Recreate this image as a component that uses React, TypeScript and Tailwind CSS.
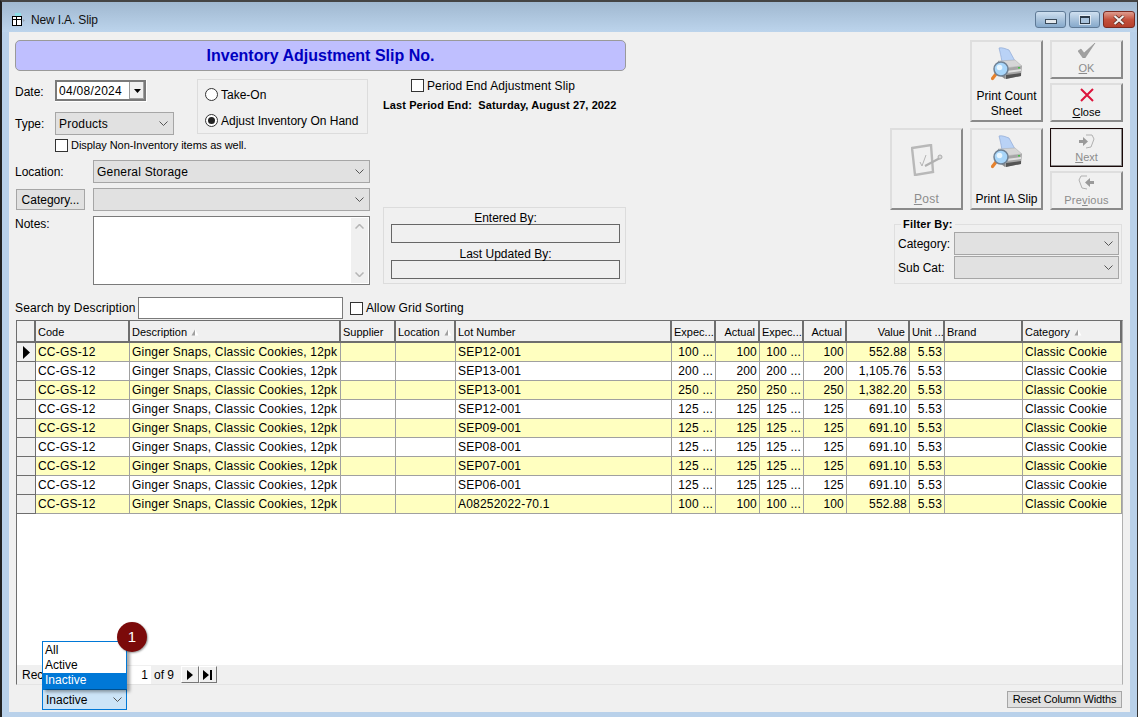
import React from 'react'

const gridCols =
  'grid grid-cols-[19px_94px_211px_55px_60px_216px_44px_44px_44px_43px_63px_35px_78px_99px]'

const columns = [
  { label: 'Code' },
  { label: 'Description', sort: true },
  { label: 'Supplier' },
  { label: 'Location', sort: true },
  { label: 'Lot Number' },
  { label: 'Expec...' },
  { label: 'Actual', right: true },
  { label: 'Expec...' },
  { label: 'Actual', right: true },
  { label: 'Value', right: true },
  { label: 'Unit ...' },
  { label: 'Brand' },
  { label: 'Category', sort: true }
]

const slips = [
  { lot: 'SEP12-001', qty: '100', value: '552.88' },
  { lot: 'SEP13-001', qty: '200', value: '1,105.76' },
  { lot: 'SEP13-001', qty: '250', value: '1,382.20' },
  { lot: 'SEP12-001', qty: '125', value: '691.10' },
  { lot: 'SEP09-001', qty: '125', value: '691.10' },
  { lot: 'SEP08-001', qty: '125', value: '691.10' },
  { lot: 'SEP07-001', qty: '125', value: '691.10' },
  { lot: 'SEP06-001', qty: '125', value: '691.10' },
  { lot: 'A08252022-70.1', qty: '100', value: '552.88' }
]

function Chevron() {
  return (
    <svg width="9" height="5" viewBox="0 0 9 5" className="shrink-0">
      <path d="M0.5 0.5 L4.5 4.5 L8.5 0.5" fill="none" stroke="#555" strokeWidth="1" />
    </svg>
  )
}

function Select({ value, className = '' }: { value?: string; className?: string }) {
  return (
    <div
      className={`flex items-center justify-between border border-[#a6a6a6] bg-[#e1e1e1] pl-[3px] pr-[5px] ${className}`}
    >
      <span>{value}</span>
      <Chevron />
    </div>
  )
}

function Checkbox() {
  return <span className="block h-[13px] w-[13px] shrink-0 border border-[#333] bg-white" />
}

function PrinterIcon() {
  return (
    <svg width="32" height="34" viewBox="0 0 32 34" className="block">
      <path d="M8 1 C11 0 15 2 18 3 L24 14 L11 15 C10 9 9 5 8 1 Z" fill="#b9d2f6" stroke="#8fa9d6" strokeWidth="0.7" />
      <path d="M7 14 L24 13 L31 19 L14 21 Z" fill="#d6d6d6" stroke="#a0a0a0" strokeWidth="0.4" />
      <path d="M14 21 L31 19 L30 29 L14 32 Z" fill="#a6a6a6" />
      <path d="M7 14 L14 21 L14 32 L6 26 Z" fill="#8c8c8c" />
      <path d="M15 24 L30 22 L30 24 L15 26 Z" fill="#e0e0e0" />
      <path d="M15 28 L30 26 L30 29 L15 32 Z" fill="#555555" />
      <rect x="27" y="20" width="2" height="1.5" fill="#46c046" />
      <path d="M5 27 L1.5 31.5" stroke="#e5822e" strokeWidth="3.2" strokeLinecap="round" />
      <circle cx="10" cy="22" r="7" fill="#a8d6fa" stroke="#6f8295" strokeWidth="1.5" />
      <circle cx="8.5" cy="20.5" r="2.8" fill="#e8f6ff" />
    </svg>
  )
}

function CheckIcon() {
  return (
    <svg width="18" height="15" viewBox="0 0 18 15" className="block">
      <path d="M0 8 L3 6 L6 10 L17 0 L7 15 L5 15 Z" fill="#a0a0a0" stroke="#8a8a8a" strokeWidth="0.5" />
    </svg>
  )
}

function CloseIcon() {
  return (
    <svg width="14" height="14" viewBox="0 0 14 14" className="block">
      <path d="M1 1 L13 13 M13 1 L1 13" stroke="#dc143c" strokeWidth="2" />
    </svg>
  )
}

function NextIcon() {
  return (
    <svg width="17" height="15" viewBox="0 0 17 15" className="block">
      <path d="M8 1 L14 1 L16 5 L13 13 L8 14" fill="none" stroke="#b0b0b0" />
      <path d="M1 6 L5 6 L5 3 L10 7.5 L5 12 L5 9 L1 9 Z" fill="#9a9a9a" />
    </svg>
  )
}

function PrevIcon() {
  return (
    <svg width="17" height="15" viewBox="0 0 17 15" className="block">
      <path d="M9 1 L3 1 L1 5 L4 13 L9 14" fill="none" stroke="#b0b0b0" />
      <path d="M16 6 L12 6 L12 3 L7 7.5 L12 12 L12 9 L16 9 Z" fill="#9a9a9a" />
    </svg>
  )
}

function PostIcon() {
  return (
    <svg width="32" height="32" viewBox="0 0 32 32" className="block">
      <path d="M1 4 L20 1 L22 28 L4 31 Z" fill="#f0f0f0" stroke="#b8b8b8" strokeWidth="2.4" />
      <path d="M9 18 L11 22 L15 11" fill="none" stroke="#b5b5b5" strokeWidth="1" />
      <path d="M14 22 L29 14" stroke="#b0b0b0" strokeWidth="2" />
      <circle cx="29" cy="13" r="2" fill="#d9d9d9" stroke="#adadad" />
    </svg>
  )
}

function ToolButton({
  children,
  tall,
  disabled,
  focused
}: {
  children: React.ReactNode
  tall?: boolean
  disabled?: boolean
  focused?: boolean
}) {
  return (
    <button
      className={`flex w-[73px] flex-col items-center ${
        focused
          ? 'border border-[#1a0a0a] p-px shadow-[inset_-1px_-1px_0_#8a8a8a,inset_1px_1px_0_#dedede]'
          : 'border-2 border-t-[#dedede] border-l-[#dedede] border-r-[#8a8a8a] border-b-[#8a8a8a]'
      } ${tall ? 'h-[82px]' : 'h-[39px]'} ${disabled ? 'text-[#8c8c8c]' : 'text-black'}`}
    >
      {children}
    </button>
  )
}

function Header() {
  return (
    <div className={`${gridCols} h-[22px] shrink-0 text-[11px]`}>
      <div className="border-r-2 border-b-2 border-[#6e6e6e] bg-[#f0f0f0]" />
      {columns.map((col) => (
        <div
          key={col.label + col.right}
          className={`flex items-center gap-[4px] overflow-hidden whitespace-nowrap border-r-2 border-b-2 border-[#6e6e6e] bg-[#f0f0f0] pl-[2px] pt-[2px] ${
            col.right ? 'justify-end pr-[3px]' : 'pr-[1px]'
          }`}
        >
          <span>{col.label}</span>
          {col.sort && (
            <svg width="8" height="7" viewBox="0 0 8 7">
              <path d="M4 0.5 L0.5 6.5 L4 6.5 Z" fill="#a0a0a0" />
              <path d="M4 0.5 L7.5 6.5 L4 6.5 Z" fill="#ffffff" />
            </svg>
          )}
        </div>
      ))}
    </div>
  )
}

function Cell({ children, right }: { children?: React.ReactNode; right?: boolean }) {
  return (
    <div
      className={`overflow-hidden whitespace-nowrap border-r border-b border-[#a0a0a0] px-[2px] leading-[18px] tracking-[0.2px] ${
        right ? 'text-right' : ''
      }`}
    >
      {children}
    </div>
  )
}

function Row({ slip, index }: { slip: (typeof slips)[number]; index: number }) {
  return (
    <div className={`${gridCols} h-[19px] ${index % 2 === 0 ? 'bg-[#ffffc0]' : 'bg-white'}`}>
      <div className="flex items-center justify-center border-r border-b border-[#6e6e6e] bg-[#f0f0f0]">
        {index === 0 && (
          <svg width="7" height="13" viewBox="0 0 7 13">
            <path d="M0 0 L7 6.5 L0 13 Z" fill="#000" />
          </svg>
        )}
      </div>
      <Cell>CC-GS-12</Cell>
      <Cell>Ginger Snaps, Classic Cookies, 12pk</Cell>
      <Cell />
      <Cell />
      <Cell>{slip.lot}</Cell>
      <Cell right>{slip.qty} ...</Cell>
      <Cell right>{slip.qty}</Cell>
      <Cell right>{slip.qty} ...</Cell>
      <Cell right>{slip.qty}</Cell>
      <Cell right>{slip.value}</Cell>
      <Cell right>5.53</Cell>
      <Cell />
      <Cell>Classic Cookie</Cell>
    </div>
  )
}

function NavButton({ children }: { children: React.ReactNode }) {
  return (
    <button className="flex h-[17px] w-[18px] items-center justify-center border border-r-[#777] border-b-[#777] border-t-white border-l-white bg-[#f0f0f0]">
      {children}
    </button>
  )
}

function LeftForm() {
  return (
    <div className="w-[355px]">
      <div className="flex">
        <div className="w-[182px]">
          <div className="mt-[9px] flex h-[22px] items-center">
            <span className="w-[40px] pt-[1px]">Date:</span>
            <div className="flex h-[22px] w-[92px] items-center border-r border-b border-white">
              <div className="flex h-full w-full items-center border-2 border-[#7a7a7a] bg-white pl-[2px] tracking-[0.3px]">
                <span className="flex-1 pt-[1px]">04/08/2024</span>
                <span className="flex h-full w-[15px] items-center justify-center border-l border-[#999] bg-[#f0f0f0] shadow-[inset_-1px_-1px_0_#a0a0a0]">
                  <svg width="7" height="4" viewBox="0 0 7 4">
                    <path d="M0 0 L7 0 L3.5 4 Z" fill="#000" />
                  </svg>
                </span>
              </div>
            </div>
          </div>
          <div className="mt-[10px] flex h-[23px] items-center">
            <span className="w-[40px]">Type:</span>
            <Select value="Products" className="h-[23px] w-[119px] tracking-[0.2px]" />
          </div>
          <label className="ml-[40px] mt-[4px] flex h-[13px] items-center gap-[3px] text-[11px] tracking-[-0.05px]">
            <Checkbox />
            <span className="whitespace-nowrap">Display Non-Inventory items as well.</span>
          </label>
        </div>
        <div className="mt-[8px] h-[55px] w-[171px] border border-[#dcdcdc] pl-[7px] pt-[5px]">
          <div className="flex h-[19px] items-center gap-[3px]">
            <span className="h-[13px] w-[13px] rounded-full border border-[#333] bg-white" />
            <span>Take-On</span>
          </div>
          <div className="mt-[7px] flex h-[19px] items-center gap-[3px]">
            <span className="flex h-[13px] w-[13px] items-center justify-center rounded-full border border-[#333] bg-white">
              <span className="h-[7px] w-[7px] rounded-full bg-[#222]" />
            </span>
            <span className="whitespace-nowrap">Adjust Inventory On Hand</span>
          </div>
        </div>
      </div>
      <div className="mt-[8px] flex h-[23px] items-center">
        <span className="w-[78px]">Location:</span>
        <Select value="General Storage" className="h-[23px] w-[277px] tracking-[0.2px]" />
      </div>
      <div className="mt-[5px] flex h-[23px] items-center">
        <div className="w-[78px]">
          <button className="ml-[1px] h-[21px] w-[69px] border border-[#a6a6a6] bg-[#e1e1e1]">
            Category...
          </button>
        </div>
        <Select className="h-[23px] w-[277px]" />
      </div>
      <div className="mt-[5px] flex h-[69px]">
        <span className="mt-[-1px] w-[78px]">Notes:</span>
        <div className="flex w-[277px] justify-end border border-[#7a7a7a] bg-white p-[1px]">
          <div className="flex w-[17px] flex-col items-center justify-between bg-[#f0f0f0] py-[6px]">
            <svg width="9" height="5" viewBox="0 0 9 5">
              <path d="M0.5 4.5 L4.5 0.5 L8.5 4.5" fill="none" stroke="#b5b5b5" strokeWidth="1.5" />
            </svg>
            <svg width="9" height="5" viewBox="0 0 9 5">
              <path d="M0.5 0.5 L4.5 4.5 L8.5 0.5" fill="none" stroke="#b5b5b5" strokeWidth="1.5" />
            </svg>
          </div>
        </div>
      </div>
    </div>
  )
}

function MiddleForm() {
  return (
    <div className="flex w-[243px] flex-col">
      <label className="ml-[28px] mt-[8px] flex h-[13px] items-center gap-[3px] tracking-[0.1px]">
        <Checkbox />
        <span>Period End Adjustment Slip</span>
      </label>
      <div className="mt-[7px] whitespace-nowrap text-[11px] font-bold leading-[13px] tracking-[0.1px]">
        Last Period End:&nbsp; Saturday, August 27, 2022
      </div>
      <div className="mt-[95px] h-[77px] border border-[#dcdcdc] pl-[7px] pr-[5px] pt-[3px] text-center">
        <div className="h-[13px] leading-[15px]">Entered By:</div>
        <div className="h-[19px] border border-[#666]" />
        <div className="mt-[4px] h-[13px] leading-[15px]">Last Updated By:</div>
        <div className="h-[19px] border border-[#666]" />
      </div>
    </div>
  )
}

function RightPanel() {
  return (
    <div className="ml-auto mr-[7px] flex w-[233px] flex-col">
      <div className="flex justify-end gap-[7px]">
        <ToolButton tall>
          <span className="mt-[5px] block">
            <PrinterIcon />
          </span>
          <span className="mt-[8px] block leading-[15px]">
            Print Count
            <br />
            Sheet
          </span>
        </ToolButton>
        <div className="flex flex-col gap-[4px]">
          <ToolButton disabled>
            <span className="mt-[1px] block">
              <CheckIcon />
            </span>
            <span className="mt-[3px] block text-[11px] leading-[15px]">
              <u>O</u>K
            </span>
          </ToolButton>
          <ToolButton>
            <span className="mt-[3px] block">
              <CloseIcon />
            </span>
            <span className="mt-[3px] block text-[11px] leading-[14px]">
              <u>C</u>lose
            </span>
          </ToolButton>
        </div>
      </div>
      <div className="mt-[6px] flex justify-end gap-[7px]">
        <ToolButton tall disabled>
          <span className="mt-[14px] block">
            <PostIcon />
          </span>
          <span className="mt-[16px] block leading-[15px] tracking-[0.3px]">
            <u>P</u>ost
          </span>
        </ToolButton>
        <ToolButton tall>
          <span className="mt-[5px] block">
            <PrinterIcon />
          </span>
          <span className="mt-[23px] block whitespace-nowrap leading-[15px]">Print IA Slip</span>
        </ToolButton>
        <div className="flex flex-col gap-[4px]">
          <ToolButton disabled focused>
            <span className="mt-[4px] block">
              <NextIcon />
            </span>
            <span className="mt-[1px] block text-[11px] leading-[14px]">
              <u>N</u>ext
            </span>
          </ToolButton>
          <ToolButton disabled>
            <span className="mt-[2px] block">
              <PrevIcon />
            </span>
            <span className="mt-[3px] block text-[11px] leading-[15px] tracking-[0.2px]">
              Pre<u>v</u>ious
            </span>
          </ToolButton>
        </div>
      </div>
      <fieldset className="ml-[4px] mr-[1px] mt-[7px] h-[67px] border border-[#dfdfdf] pl-[3px] pr-[2px]">
        <legend className="ml-[3px] px-[2px] text-[11px] font-bold leading-[14px] tracking-[0.2px]">
          Filter By:
        </legend>
        <div className="mt-[1px] flex h-[23px] items-center justify-between">
          <span>Category:</span>
          <Select className="h-[23px] w-[165px]" />
        </div>
        <div className="mt-[1px] flex h-[23px] items-center justify-between">
          <span>Sub Cat:</span>
          <Select className="h-[23px] w-[165px]" />
        </div>
      </fieldset>
    </div>
  )
}

function BottomBar() {
  return (
    <div className="flex h-[27px] shrink-0 justify-between pl-[33px] pr-[8px] text-[12px]">
      <div className="relative mt-[4px] h-[21px] w-[85px]">
        <div className="flex h-full items-center justify-between border border-[#0078d7] bg-[#cce4f7] pl-[3px] pr-[4px]">
          <span>Inactive</span>
          <Chevron />
        </div>
        <div className="absolute bottom-full left-0 h-[48px] w-[85px] border border-[#0078d7] bg-white pt-[1px] shadow-[3px_3px_3px_rgba(0,0,0,0.35)]">
          <div className="h-[15px] pl-[2px] leading-[15px]">All</div>
          <div className="h-[15px] pl-[2px] leading-[15px]">Active</div>
          <div className="h-[15px] bg-[#0078d7] pl-[2px] leading-[15px] text-white">Inactive</div>
        </div>
        <div className="absolute left-[75px] top-[-67px] flex h-[30px] w-[30px] items-center justify-center rounded-full bg-[#7b0a0a] text-[15px] text-white shadow-[1px_1px_2px_rgba(0,0,0,0.4)]">
          1
        </div>
      </div>
      <button className="mt-[6px] h-[17px] w-[115px] border border-[#a6a6a6] bg-[#e1e1e1] text-[11px] leading-[15px] tracking-[-0.15px]">
        Reset Column Widths
      </button>
    </div>
  )
}

function WindowControls() {
  return (
    <div className="mr-[2px] mt-[5px] flex gap-[3px]">
      <div className="flex h-[17px] w-[31px] items-center justify-center rounded-[3px] border border-[#5f7a96] bg-gradient-to-b from-[#cfe0f0] via-[#a9c3dc] to-[#86a9cb]">
        <span className="mt-[3px] h-[5px] w-[12px] border border-[#3a4a5a] bg-[#e4e9ee]" />
      </div>
      <div className="flex h-[17px] w-[31px] items-center justify-center rounded-[3px] border border-[#5f7a96] bg-gradient-to-b from-[#cfe0f0] via-[#a9c3dc] to-[#86a9cb]">
        <span className="h-[8px] w-[10px] border border-t-2 border-[#2d3a48] bg-[#a9c3dc] shadow-[0_0_0_1px_rgba(255,255,255,0.6)]" />
      </div>
      <div className="flex h-[17px] w-[32px] items-center justify-center rounded-[3px] border border-[#7a2a20] bg-gradient-to-b from-[#dd9d90] via-[#c4513d] to-[#b5402c]">
        <svg width="12" height="10" viewBox="0 0 12 10">
          <path d="M1.5 1 L10.5 9 M10.5 1 L1.5 9" stroke="#5a2a20" strokeWidth="3.6" />
          <path d="M1.5 1 L10.5 9 M10.5 1 L1.5 9" stroke="#f2f2f2" strokeWidth="2.2" />
        </svg>
      </div>
    </div>
  )
}

export default function App() {
  return (
    <div className="flex h-[717px] w-[1138px] flex-col overflow-hidden border-l-2 border-r border-t-2 border-l-[#222] border-r-[#333] border-t-[#444] bg-[#b9d1ea] font-['Liberation_Sans',Arial,sans-serif] text-[12px] text-black">
      <div className="flex h-[30px] shrink-0 items-center justify-between bg-gradient-to-b from-[#a0b8d0] to-[#bcd4ec] pl-[10px]">
        <div className="mt-[6px] flex items-center gap-[3px]">
          <svg width="16" height="14" viewBox="0 0 16 14">
            <path d="M3 0 L9 0 L9 3 L3 3 Z" fill="#8fe0e8" />
            <rect x="0.5" y="3.5" width="9" height="9" fill="#fff" stroke="#000" />
            <path d="M0.5 6.5 H9.5 M4.5 3.5 V12.5" stroke="#000" />
            <path d="M11 6 L13 7.5 L11 9 Z" fill="#9aa5b0" />
          </svg>
          <span className="tracking-[-0.15px] text-[#111]">New I.A. Slip</span>
        </div>
        <WindowControls />
      </div>

      <div className="flex min-h-0 flex-1 pb-[5px] pl-[7px] pr-[7px]">
        <div className="flex w-[1121px] flex-col bg-[#f0f0f0]">
          <div className="flex h-[258px] shrink-0 pl-[6px] pt-[8px]">
            <div className="w-[611px]">
              <div className="flex h-[31px] items-center justify-center rounded-[5px] border border-[#9a9a9a] bg-[#bfbfff] text-[16px] font-bold text-[#0000c0]">
                Inventory Adjustment Slip No.
              </div>
              <div className="flex gap-[13px]">
                <LeftForm />
                <MiddleForm />
              </div>
            </div>
            <RightPanel />
          </div>

          <div className="ml-[6px] mt-[7px] flex h-[22px] shrink-0 items-center">
            <span className="w-[123px] whitespace-nowrap tracking-[0.15px]">Search by Description</span>
            <div className="h-[22px] w-[205px] border border-[#7a7a7a] bg-white" />
            <label className="ml-[7px] flex items-center gap-[3px] tracking-[0.1px]">
              <Checkbox />
              <span>Allow Grid Sorting</span>
            </label>
          </div>

          <div className="ml-[7px] mt-[1px] flex h-[365px] w-[1107px] shrink-0 flex-col border-l border-r border-t border-b border-l-[#6e6e6e] border-t-[#6e6e6e] border-r-[#b0b0b0] border-b-[#e4e4e4] bg-white">
            <Header />
            {slips.map((slip, i) => (
              <Row key={i} slip={slip} index={i} />
            ))}
            <div className="flex-1" />
            <div className="flex h-[19px] shrink-0 items-center bg-[#f0f0f0] pl-[5px]">
              <span className="w-[105px]">Rec</span>
              <div className="h-[18px] w-[24px] bg-white pr-[3px] text-right leading-[18px]">1</div>
              <span className="ml-[3px] w-[27px]">of 9</span>
              <NavButton>
                <svg width="7" height="10" viewBox="0 0 7 10">
                  <path d="M0 0 L6 5 L0 10 Z" fill="#000" />
                </svg>
              </NavButton>
              <NavButton>
                <svg width="10" height="10" viewBox="0 0 10 10">
                  <path d="M0 0 L6 5 L0 10 Z M7 0 H9 V10 H7 Z" fill="#000" />
                </svg>
              </NavButton>
            </div>
          </div>

          <BottomBar />
        </div>
      </div>
    </div>
  )
}
